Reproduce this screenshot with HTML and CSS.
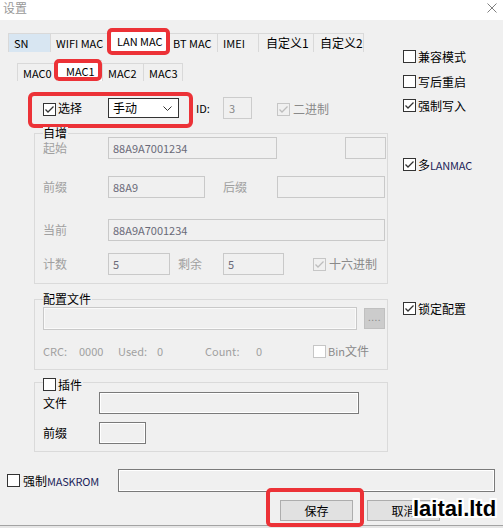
FILE: index.html
```html
<!DOCTYPE html>
<html>
<head>
<meta charset="utf-8">
<link rel="stylesheet" href="styles.css">
</head>
<body>
<div class="win">
  <div class="titlebar">
    <span class="title">设置</span>
    <svg class="close" width="10" height="10" viewBox="0 0 10 10"><path d="M0.5 0.5L9.5 9.5M9.5 0.5L0.5 9.5" stroke="#808080" stroke-width="1" fill="none"/></svg>
  </div>
  <div class="cols">
    <div class="left">
      <div class="tabs">
        <div class="tab hov w-sn">SN</div>
        <div class="tab w-wifi">WIFI MAC</div>
        <div class="tab sel w-lan">LAN MAC</div>
        <div class="tab w-bt">BT MAC</div>
        <div class="tab w-imei">IMEI</div>
        <div class="tab zh w-z1">自定义1</div>
        <div class="tab zh last w-z2">自定义2</div>
      </div>
      <div class="subtabs">
        <div class="stab w-m0">MAC0</div>
        <div class="stab sel w-m1">MAC1</div>
        <div class="stab w-m2">MAC2</div>
        <div class="stab last w-m3">MAC3</div>
      </div>
      <div class="selrow">
        <div class="hl">
          <span class="cb on"><svg width="11" height="11" viewBox="0 0 11 11"><path d="M1.5 5.5L4 8L9.5 2.5" stroke="#333" stroke-width="1.3" fill="none"/></svg></span>
          <span class="cbtext">选择</span>
          <div class="dd"><span>手动</span><svg class="chev" width="9" height="5" viewBox="0 0 9 5"><path d="M0.5 0.5L4.5 4.5L8.5 0.5" stroke="#333" stroke-width="1" fill="none"/></svg></div>
        </div>
        <span class="idl">ID:</span>
        <div class="idbox">3</div>
        <span class="cb dis bin2"><svg width="11" height="11" viewBox="0 0 11 11"><path d="M1.5 5.5L4 8L9.5 2.5" stroke="#bdbdbd" stroke-width="1.3" fill="none"/></svg></span>
        <span class="distext bin2t">二进制</span>
      </div>

      <div class="group g1">
        <span class="gtitle">自增</span>
        <div class="row r1">
          <span class="lab">起始</span>
          <div class="field w169">88A9A7001234</div>
          <div class="field w41 ml68"></div>
        </div>
        <div class="row r2">
          <span class="lab">前缀</span>
          <div class="field w97">88A9</div>
          <span class="lab lab2">后缀</span>
          <div class="field w108"></div>
        </div>
        <div class="row r3">
          <span class="lab">当前</span>
          <div class="field w277">88A9A7001234</div>
        </div>
        <div class="row r4">
          <span class="lab">计数</span>
          <div class="field w62">5</div>
          <span class="lab lab3">剩余</span>
          <div class="field w61">5</div>
          <span class="cb dis hex"><svg width="11" height="11" viewBox="0 0 11 11"><path d="M1.5 5.5L4 8L9.5 2.5" stroke="#bdbdbd" stroke-width="1.3" fill="none"/></svg></span>
          <span class="distext hext">十六进制</span>
        </div>
      </div>

      <div class="group g2">
        <span class="gtitle">配置文件</span>
        <div class="row c1">
          <div class="field w314 tall"></div>
          <div class="dots">....</div>
        </div>
        <div class="row c2">
          <span class="gl w36">CRC:</span>
          <span class="gl w39">0000</span>
          <span class="gl w39">Used:</span>
          <span class="gl w48">0</span>
          <span class="gl w51">Count:</span>
          <span class="gl w57">0</span>
          <span class="cb dis2"></span>
          <span class="distext bint"><span class="sm">Bin</span>文件</span>
        </div>
      </div>

      <div class="group g3">
        <span class="gtitle gtcb"><span class="cb"></span><span class="cbtext">插件</span></span>
        <div class="row p1">
          <span class="lab blk w56">文件</span>
          <div class="field dark w260"></div>
        </div>
        <div class="row p2">
          <span class="lab blk w56">前缀</span>
          <div class="field dark w47"></div>
        </div>
      </div>
    </div>

    <div class="right">
      <div class="ropt o1"><span class="cb"></span><span class="cbtext">兼容模式</span></div>
      <div class="ropt o2"><span class="cb"></span><span class="cbtext">写后重启</span></div>
      <div class="ropt o3"><span class="cb on"><svg width="11" height="11" viewBox="0 0 11 11"><path d="M1.5 5.5L4 8L9.5 2.5" stroke="#333" stroke-width="1.3" fill="none"/></svg></span><span class="cbtext">强制写入</span></div>
      <div class="ropt o4"><span class="cb on"><svg width="11" height="11" viewBox="0 0 11 11"><path d="M1.5 5.5L4 8L9.5 2.5" stroke="#333" stroke-width="1.3" fill="none"/></svg></span><span class="cbtext">多<span class="en">LANMAC</span></span></div>
      <div class="ropt o5"><span class="cb on"><svg width="11" height="11" viewBox="0 0 11 11"><path d="M1.5 5.5L4 8L9.5 2.5" stroke="#333" stroke-width="1.3" fill="none"/></svg></span><span class="cbtext">锁定配置</span></div>
    </div>
  </div>

  <div class="maskrow">
    <span class="cb"></span>
    <span class="cbtext mtext">强制<span class="en">MASKROM</span></span>
    <div class="field dark w377"></div>
  </div>

  <div class="btnrow">
    <div class="hlbtn"><div class="btn">保存</div></div>
    <div class="btn cancel">取消</div>
  </div>

  <div class="wm">laitai.ltd</div>
</div>
</body>
</html>
```

FILE: styles.css
```css
* { box-sizing: border-box; }
html, body { margin: 0; padding: 0; }
body {
  width: 503px;
  height: 528px;
  overflow: hidden;
  font-family: "Noto Sans CJK SC", "Liberation Sans", sans-serif;
  font-size: 12px;
  line-height: 14px;
  color: #000;
  background: #f0f0f0;
}
.win {
  position: relative;
  height: 528px;
  background: linear-gradient(to bottom, #f0f0f0 525px, #a3a3a3 525px, #a3a3a3 526px, #e6e6e6 526px);
}
.titlebar {
  height: 20px;
  background: #fff;
  display: flex;
  align-items: flex-start;
}
.title { margin-left: 3px; line-height: 15px; color: #999; }
.close { margin-left: auto; margin-right: 6px; margin-top: 3px; display: block; }

.cols { display: flex; }
.left { width: 395px; flex: none; }
.right { margin-left: 8px; padding-top: 30px; }

/* tabs */
.tabs {
  display: flex;
  align-items: flex-end;
  margin-top: 9px;
  padding-left: 8px;
  height: 23px;
}
.tab {
  height: 19px;
  line-height: 18px;
  border: 1px solid #d9d9d9;
  border-bottom: 0;
  border-right: 0;
  padding-left: 5px;
  white-space: nowrap;
  flex: none;
  font-size: 11px;
}
.tab.zh { font-size: 12px; }
.tab.last { border-right: 1px solid #d9d9d9; }
.tab.hov { background: #d8e6f2; }
.tab.sel {
  height: 23px;
  line-height: 22px;
  background: #fff;
  position: relative;
  padding-left: 8px;
}
.tab.sel::after {
  content: "";
  position: absolute;
  left: -2px; top: -2px; right: -3px; bottom: -3px;
  border: 4px solid #ec3237;
  border-radius: 5px;
}
.w-sn { width: 42px; }
.w-wifi { width: 58px; }
.w-lan { width: 59px; }
.w-bt { width: 50px; }
.w-imei { width: 41px; }
.w-z1 { width: 55px; padding-left: 7px; }
.w-z2 { width: 51px; padding-left: 6px; }

.subtabs {
  display: flex;
  align-items: flex-end;
  margin-top: 8px;
  padding-left: 17px;
  height: 21px;
}
.stab {
  height: 18px;
  line-height: 18px;
  border: 1px solid #d9d9d9;
  border-bottom: 0;
  border-right: 0;
  padding-left: 5px;
  flex: none;
  font-size: 11px;
}
.stab.last { border-right: 1px solid #d9d9d9; }
.stab.sel {
  height: 21px;
  line-height: 20px;
  background: #fff;
  position: relative;
  padding-left: 9px;
}
.stab.sel::after {
  content: "";
  position: absolute;
  left: -3px; top: -2px; right: 0; bottom: 0;
  border: 4px solid #ec3237;
  border-radius: 5px;
}
.w-m0 { width: 39px; }
.w-m1 { width: 46px; }
.w-m2 { width: 41px; }
.w-m3 { width: 40px; }

/* checkbox */
.cb {
  width: 13px;
  height: 13px;
  border: 1px solid #333;
  background: #fff;
  display: inline-flex;
  align-items: center;
  justify-content: center;
  flex: none;
}
.cb svg { display: block; }
.cb.dis { border-color: #c6c6c6; background: #f0f0f0; }
.cb.dis2 { border-color: #c6c6c6; background: #fff; }
.cbtext { margin-left: 2px; white-space: nowrap; }
.distext { color: #8a8a8a; white-space: nowrap; }
.en { color: #1c1f5a; font-size: 11px; letter-spacing: -0.2px; }
.sm { font-size: 11px; }

/* select row */
.selrow {
  display: flex;
  align-items: flex-start;
  margin-top: 11px;
  margin-left: 28px;
  height: 36px;
}
.hl {
  display: flex;
  align-items: center;
  width: 165px;
  height: 36px;
  border: 4px solid #ec3237;
  border-radius: 6px;
  padding: 0 0 4px 11px;
  flex: none;
}
.hl .cb { margin-top: 3px; }
.dd {
  margin-left: 26px;
  width: 71px;
  height: 20px;
  border: 1px solid #333;
  background: #fff;
  display: flex;
  align-items: center;
  padding-left: 4px;
}
.chev { margin-left: auto; margin-right: 6px; display: block; }
.idl { width: 27px; margin-left: 3px; margin-top: 9px; font-size: 11px; }
.idbox {
  width: 29px;
  height: 22px;
  margin-top: 5px;
  border: 1px solid #ccc;
  color: #888;
  padding: 3px 0 0 5px;
  font-size: 11px;
}
.bin2 { margin-left: 25px; margin-top: 11px; }
.bin2t { margin-left: 3px; margin-top: 10px; }

/* groups */
.group {
  position: relative;
  margin-left: 34px;
  width: 354px;
  border: 1px solid #dadada;
  padding-left: 8px;
}
.gtitle {
  position: absolute;
  top: -7px;
  left: 8px;
  background: #f0f0f0;
  padding: 0 1px 0 0;
  line-height: 12px;
  display: flex;
  align-items: center;
}
.g1 { margin-top: 5px; height: 151px; }
.g2 { margin-top: 15px; height: 71px; }
.g3 { margin-top: 12px; height: 70px; }
.gtcb { top: -5px; }

.row { display: flex; align-items: center; }
.r1 { margin-top: 3px; }
.r2 { margin-top: 17px; }
.r3 { margin-top: 21px; }
.r4 { margin-top: 12px; }
.c1 { margin-top: 7px; }
.c2 { margin-top: 14px; }
.p1 { margin-top: 9px; }
.p2 { margin-top: 8px; }

.lab { width: 65px; color: #a0a0a0; flex: none; white-space: nowrap; }
.lab.blk { color: #000; }
.lab2 { margin-left: 18px; width: 54px; }
.lab3 { margin-left: 8px; width: 45px; }
.w56 { width: 56px; }

.field {
  height: 22px;
  border: 1px solid #c9c9c9;
  padding: 3px 0 0 4px;
  color: #6a6a78;
  flex: none;
  white-space: nowrap;
  font-size: 11px;
}
.field.tall { height: 23px; box-shadow: inset 0 0 0 1px #fafafa; }
.field.dark { border-color: #7a7a7a; box-shadow: inset 0 0 0 1px #fff; }
.w169 { width: 169px; }
.w41 { width: 41px; }
.ml68 { margin-left: 68px; }
.w97 { width: 97px; }
.w108 { width: 108px; }
.w277 { width: 277px; }
.w62 { width: 62px; }
.w61 { width: 61px; }
.w314 { width: 314px; }
.w260 { width: 260px; }
.w47 { width: 47px; }
.w377 { width: 377px; height: 23px; }

.hex { margin-left: 29px; }
.hext { margin-left: 3px; }

.dots {
  margin-left: 7px;
  width: 21px;
  height: 21px;
  background: #cccccc;
  border: 1px solid #c0c0c0;
  color: #8a8a8a;
  font-size: 10px;
  line-height: 16px;
  text-align: center;
  letter-spacing: 0.5px;
}

.gl { color: #a0a0a0; flex: none; font-size: 11px; }
.w36 { width: 36px; }
.w39 { width: 39px; }
.w48 { width: 48px; }
.w51 { width: 51px; }
.w57 { width: 57px; }
.bint { margin-left: 2px; }

/* right options */
.ropt { display: flex; align-items: center; height: 13px; }
.o1 { margin-top: 0; }
.o2 { margin-top: 12px; }
.o3 { margin-top: 11px; }
.o4 { margin-top: 46px; }
.o5 { margin-top: 131px; }

/* bottom */
.maskrow {
  display: flex;
  align-items: center;
  margin-top: 17px;
  padding-left: 7px;
  height: 23px;
}
.mtext { width: 95px; margin-left: 3px; }
.btnrow {
  display: flex;
  align-items: flex-start;
  margin-top: -4px;
  padding-left: 266px;
}
.hlbtn {
  border: 4px solid #ec3237;
  border-radius: 5px;
  padding: 8px 7px 2px 10px;
  height: 39px;
}
.btn {
  width: 73px;
  height: 21px;
  background: #e1e1e1;
  border: 1px solid #adadad;
  text-align: center;
  line-height: 19px;
}
.cancel { margin-left: 3px; margin-top: 12px; }

.wm {
  position: absolute;
  left: 413px;
  top: 496px;
  font-family: "Liberation Sans", sans-serif;
  font-weight: bold;
  font-size: 22px;
  line-height: 26px;
  color: #000;
  text-shadow:
    2px 0 0 #fff, -2px 0 0 #fff, 0 2px 0 #fff, 0 -2px 0 #fff,
    2px 2px 0 #fff, -2px -2px 0 #fff, 2px -2px 0 #fff, -2px 2px 0 #fff,
    1px 2px 0 #fff, 2px 1px 0 #fff, -1px 2px 0 #fff, -2px 1px 0 #fff,
    1px -2px 0 #fff, 2px -1px 0 #fff, -1px -2px 0 #fff, -2px -1px 0 #fff;
}
```
